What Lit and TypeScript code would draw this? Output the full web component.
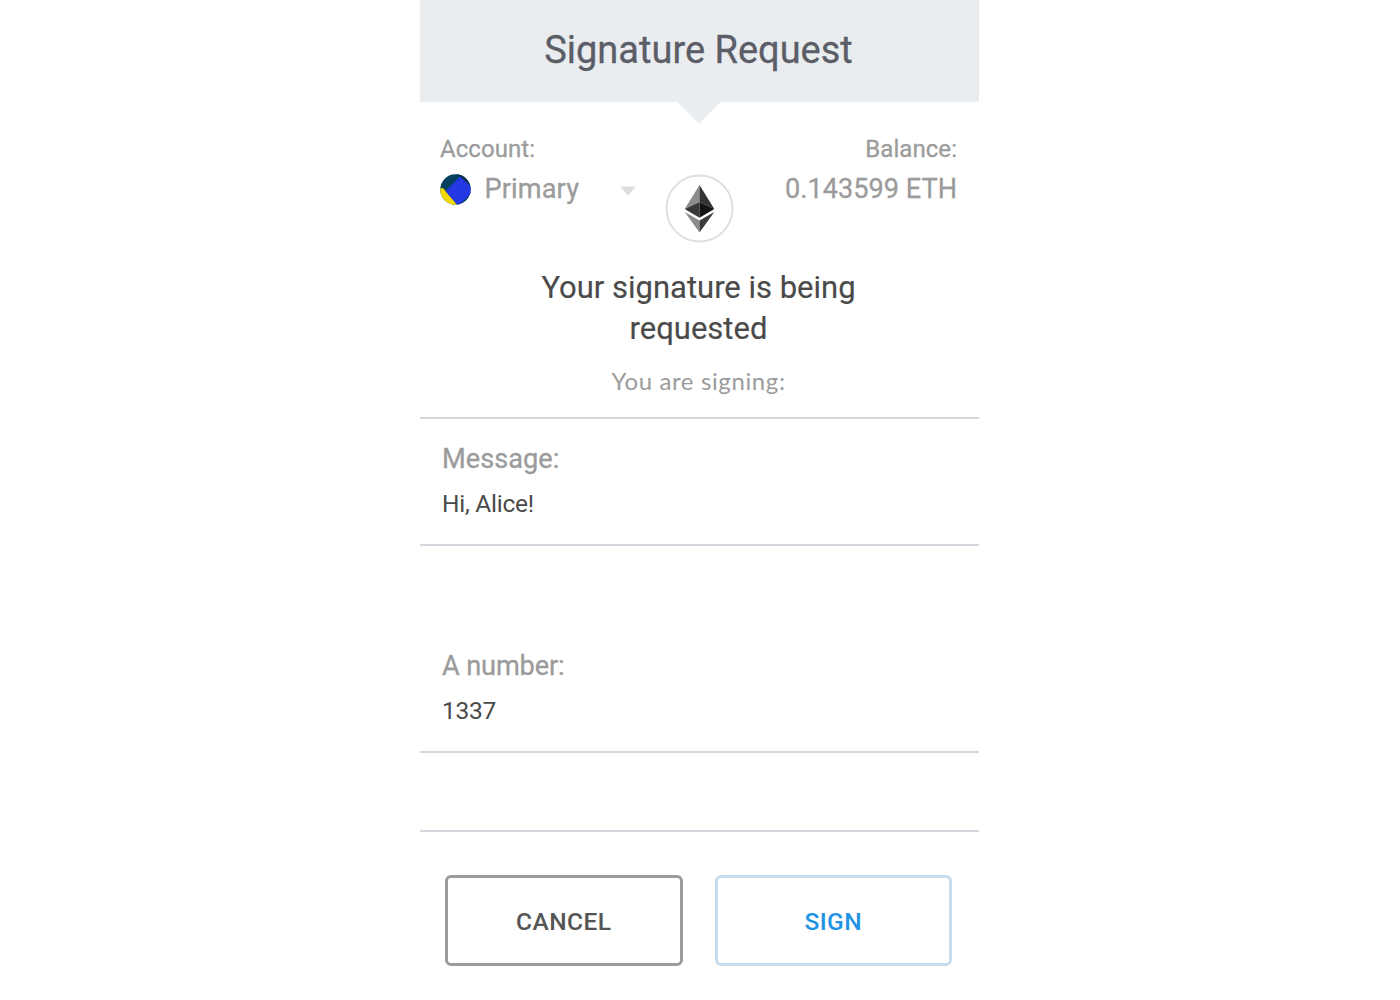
import { LitElement, html, css } from "lit";
import { customElement } from "lit/decorators.js";

@customElement("app-root")
export class AppRoot extends LitElement {
  static styles = css`
    :host {
      display: block;
      height: 1000px;
      overflow: hidden;
      background: #fff;
      font-family: Roboto, "Liberation Sans", sans-serif;
      color: #9b9b9b;
      -webkit-text-stroke: 0.3px currentColor;
    }
    .card {
      width: 559px;
      margin-left: 420px;
      display: flex;
      flex-direction: column;
    }
    .header {
      box-sizing: border-box;
      height: 101.5px;
      padding-top: 28px;
      background: #e9edf0;
      text-align: center;
      font-size: 38px;
      line-height: 45px;
      color: #5b5d67;
      position: relative;
      text-indent: -2px;
    }
    .notch {
      position: absolute;
      left: 257px;
      top: 101px;
      display: block;
    }
    .account {
      box-sizing: border-box;
      height: 163.5px;
      padding: 32px 22px 0 20px;
      display: grid;
      grid-template-columns: 196px 1fr 196px;
    }
    .label {
      font-size: 24px;
      line-height: 30px;
      letter-spacing: 0.05px;
    }
    .value {
      display: flex;
      align-items: center;
      height: 50px;
      font-size: 27.15px;
      line-height: 34px;
    }
    .jazz {
      margin-top: 2px;
    }
    .name {
      margin-left: 13.5px;
      flex: 1;
      letter-spacing: 0.12px;
    }
    .right {
      text-align: right;
    }
    .right .value {
      justify-content: flex-end;
    }
    .caret {
      display: block;
      margin-top: 4px;
    }
    .eth {
      display: block;
      margin: 39px 0 0 28px;
    }
    .headline {
      height: 94px;
      padding-top: 2px;
      box-sizing: border-box;
      text-align: center;
      font-size: 31px;
      line-height: 41px;
      color: #4a4a4a;
      padding-right: 2px;
      -webkit-text-stroke-width: 0.15px;
    }
    .signing {
      box-sizing: border-box;
      height: 58px;
      padding: 8px 2px 0 0;
      text-align: center;
      font-family: Lato, "Open Sans", sans-serif;
      font-size: 24px;
      line-height: 28px;
      letter-spacing: 0.62px;
      -webkit-text-stroke-width: 0;
    }
    .row {
      box-sizing: border-box;
      padding-left: 22px;
      border-top: 2px solid #d2d8dd;
      height: 127px;
    }
    .row.second {
      height: 206.5px;
      padding-top: 79.5px;
    }
    .row.empty {
      height: 79.5px;
    }
    .key {
      padding-top: 23px;
      font-size: 27.2px;
      line-height: 34px;
    }
    .second .key {
      letter-spacing: -0.15px;
    }
    .text {
      padding-top: 13px;
      font-size: 24.5px;
      line-height: 30px;
      letter-spacing: -0.25px;
      color: #4a4a4a;
      -webkit-text-stroke-width: 0;
    }
    .footer {
      border-top: 2px solid #d2d8dd;
      padding: 42.5px 27px 0 25px;
      display: flex;
      justify-content: space-between;
    }
    .button {
      box-sizing: border-box;
      width: 237.5px;
      height: 91.5px;
      border: 3.4px solid #9b9b9b;
      border-radius: 6px;
      background: #fff;
      padding: 3px 0 0;
      font-family: inherit;
      font-size: 24.5px;
      font-weight: 500;
      letter-spacing: 0.45px;
      color: #555;
      -webkit-text-stroke-width: 0;
    }
    .button.sign {
      border-color: #c6dced;
      color: #1f93e4;
    }
  `;

  render() {
    return html`
      <div class="card">
        <div class="header">
          Signature Request
          <svg class="notch" width="44" height="23" viewBox="0 0 44 23">
            <path d="M0 0H44V.5L22 22.8L0 .5Z" fill="#e9edf0" />
          </svg>
        </div>
        <div class="account">
          <div>
            <div class="label">Account:</div>
            <div class="value">
              <svg class="jazz" width="31" height="31" viewBox="0 0 31 31">
                <defs><clipPath id="disc"><circle cx="15.5" cy="15.5" r="15.2" /></clipPath></defs>
                <g clip-path="url(#disc)">
                  <rect width="31" height="31" fill="#03405e" />
                  <path d="M16 0L31 13V0Z" fill="#04304c" />
                  <path d="M0 14.5L3 14L18 31H0Z" fill="#f3d900" />
                  <path d="M20 2.5L35 16L18 32L5.5 17.3Z" fill="#2337e2" />
                </g>
              </svg>
              <span class="name">Primary</span>
              <svg class="caret" width="16" height="10" viewBox="0 0 16 10">
                <path d="M1 .5H15Q16 .5 15.2 1.6L9 8.6Q8 9.6 7 8.6L.8 1.6Q0 .5 1 .5Z" fill="#dedede" />
              </svg>
            </div>
          </div>
          <svg class="eth" width="70" height="70" viewBox="0 0 70 70">
            <g transform="translate(.5 .5)">
              <circle cx="35" cy="35" r="33" fill="#fff" stroke="#dedede" stroke-width="1.8" />
              <path d="M35 11.5V28.5L20.2 35.5Z" fill="#8c8c8c" />
              <path d="M35 11.5L49.8 35.5L35 28.5Z" fill="#343434" />
              <path d="M35 28.5V44.3L20.2 35.5Z" fill="#393939" />
              <path d="M35 28.5L49.8 35.5L35 44.3Z" fill="#141414" />
              <path d="M20.2 38.4L35 47.1V59Z" fill="#8c8c8c" />
              <path d="M49.8 38.4L35 47.1V59Z" fill="#3c3c3b" />
            </g>
          </svg>
          <div class="right">
            <div class="label">Balance:</div>
            <div class="value">0.143599 ETH</div>
          </div>
        </div>
        <div class="headline">Your signature is being<br />requested</div>
        <div class="signing">You are signing:</div>
        <div class="row">
          <div class="key">Message:</div>
          <div class="text">Hi, Alice!</div>
        </div>
        <div class="row second">
          <div class="key">A number:</div>
          <div class="text">1337</div>
        </div>
        <div class="row empty"></div>
        <div class="footer">
          <button class="button">CANCEL</button>
          <button class="button sign">SIGN</button>
        </div>
      </div>
    `;
  }
}
